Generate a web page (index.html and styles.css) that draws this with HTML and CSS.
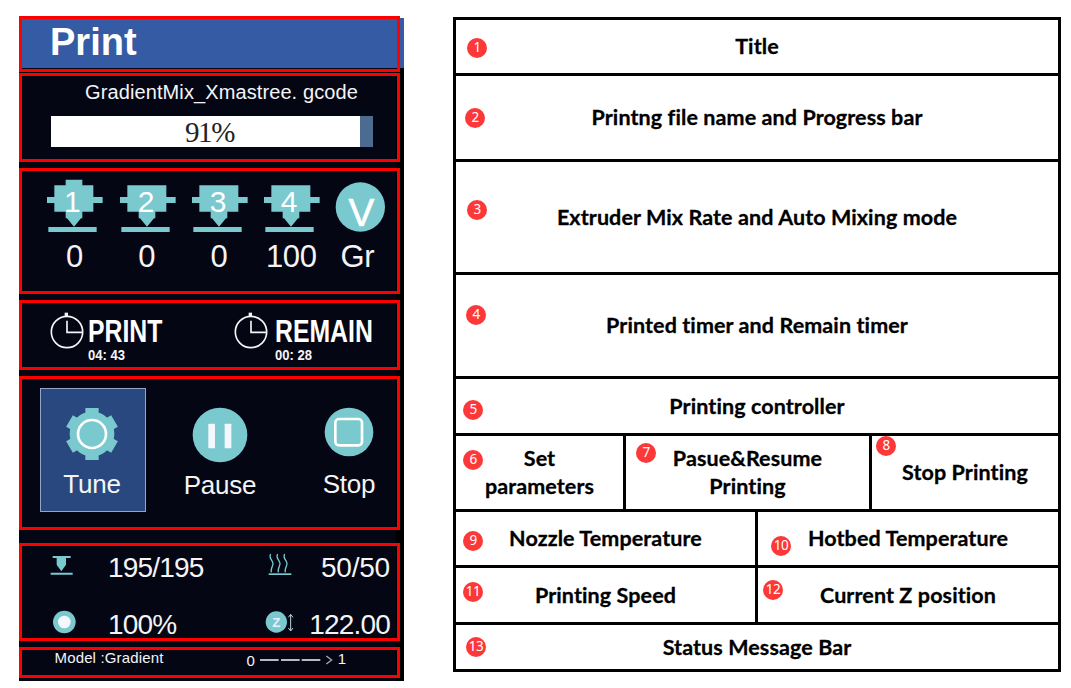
FILE: index.html
```html
<!DOCTYPE html>
<html lang="en">
<head>
<meta charset="utf-8">
<title>Print screen guide</title>
<link rel="stylesheet" href="styles.css">
</head>
<body>
<main class="page">
  <div class="screen">
    <header class="zone zone-title"><h1>Print</h1></header>

    <section class="zone zone-file">
      <div class="filename">GradientMix_Xmastree. gcode</div>
      <div class="progress"><div class="progress-fill" style="width:96%"></div><span class="progress-text">91%</span></div>
    </section>

    <section class="zone zone-mix">
      <div class="extruder">
        <svg class="ext-icon" viewBox="112 57 171 162"><path class="teal" d="M168 59h50v17h33v35h28v18h-28v26h-33v20h-4l-21 25-21-25h-4v-20h-34v-26h-22v-18h22V76h34zM116 201h145v15H116z"/><text class="ext-num" x="188" y="155">1</text></svg>
        <span>0</span>
      </div>
      <div class="extruder">
        <svg class="ext-icon" viewBox="112 57 171 162"><path class="teal" d="M134 76h117v35h28v18h-28v26h-33v20h-4l-21 25-21-25h-4v-20h-34v-26h-22v-18h22zM116 201h145v15H116z"/><text class="ext-num" x="190" y="155">2</text></svg>
        <span>0</span>
      </div>
      <div class="extruder">
        <svg class="ext-icon" viewBox="112 57 171 162"><path class="teal" d="M134 76h117v35h28v18h-28v26h-33v20h-4l-21 25-21-25h-4v-20h-34v-26h-22v-18h22zM116 201h145v15H116z"/><text class="ext-num" x="190" y="155">3</text></svg>
        <span>0</span>
      </div>
      <div class="extruder">
        <svg class="ext-icon" viewBox="112 57 171 162"><path class="teal" d="M134 76h117v35h28v18h-28v26h-33v20h-4l-21 25-21-25h-4v-20h-34v-26h-22v-18h22zM116 201h145v15H116z"/><text class="ext-num" x="187" y="155">4</text></svg>
        <span>100</span>
      </div>
      <div class="extruder mode">
        <svg class="ext-icon" viewBox="965 57 171 162"><circle class="teal" cx="1050" cy="141" r="74"/><text class="mode-letter" x="1053" y="198">V</text></svg>
        <span>Gr</span>
      </div>
    </section>

    <section class="zone zone-time">
      <div class="timer">
        <svg class="clock" viewBox="118 64 102 114"><circle cx="169" cy="124" r="47"/><path d="M169 90v35h46"/><path class="knob" d="M167 66v11"/></svg>
        <div class="timer-text"><b>PRINT</b><small>04: 43</small></div>
      </div>
      <div class="timer remain">
        <svg class="clock" viewBox="118 64 102 114"><circle cx="169" cy="124" r="47"/><path d="M169 90v35h46"/><path class="knob" d="M167 66v11"/></svg>
        <div class="timer-text"><b>REMAIN</b><small>00: 28</small></div>
      </div>
    </section>

    <section class="zone zone-control">
      <div class="control tune">
        <svg width="54" height="54" viewBox="-78 -81 162 162">
          <g class="teal"><circle r="67"/>
            <path d="M-20-78h40v156h-40z"/>
            <path d="M-20-78h40v156h-40z" transform="rotate(60)"/>
            <path d="M-20-78h40v156h-40z" transform="rotate(120)"/></g>
          <circle class="ring" r="42"/>
        </svg>
        <span>Tune</span>
      </div>
      <div class="control pause">
        <svg width="56" height="56" viewBox="-84 -84 168 168"><circle class="teal" r="82"/><rect class="light" x="-35" y="-34" width="20" height="74" rx="2"/><rect class="light" x="14" y="-34" width="20" height="74" rx="2"/></svg>
        <span>Pause</span>
      </div>
      <div class="control stop">
        <svg width="50" height="50" viewBox="-75 -75 150 150"><circle class="teal" r="73"/><rect class="ring" x="-41" y="-39" width="80" height="79" rx="11"/></svg>
        <span>Stop</span>
      </div>
    </section>

    <section class="zone zone-stats">
      <svg class="stat-icon" viewBox="120 63 90 96"><path class="teal" d="M128 78h54v6h-14v20l-14 20-14-20V84h-12zM122 128h66v6h-66z"/></svg>
      <span>195/195</span>
      <svg class="stat-icon" viewBox="765 63 90 96"><g class="heat"><path d="M782 72c-8 14 9 19 7 30s-8 15-5 25"/><path d="M803 72c-8 14 9 19 7 30s-8 15-5 25"/><path d="M824 72c-8 14 9 19 7 30s-8 15-5 25"/></g><path class="teal" d="M776 130h68v5h-68z"/></svg>
      <span class="right wide">50/50</span>
      <svg class="stat-icon" viewBox="120 234 90 96"><circle class="teal" cx="163" cy="276" r="34"/><circle class="light" cx="163" cy="276" r="19"/></svg>
      <span>100%</span>
      <svg class="stat-icon" viewBox="765 234 90 96"><circle class="teal" cx="799" cy="276" r="32"/><text class="z-letter" x="799" y="290">Z</text><path class="z-arrow" d="M842 254v48M835 262l7-9 7 9M835 294l7 9 7-9"/></svg>
      <span class="right">122.00</span>
    </section>

    <footer class="zone zone-status">
      <span class="model">Model :Gradient</span>
      <span class="from">0</span>
      <svg class="dashes" width="74" height="12" viewBox="749 370 222 36"><path d="M752 388h56M815 388h56M877 388h56"/><path class="chev" d="M951 376l16 12-16 12"/></svg>
      <span class="to">1</span>
    </footer>
  </div>

  <div class="legend">
    <div class="row r1"><div class="cell"><i class="badge b1">1</i>Title</div></div>
    <div class="row r2"><div class="cell"><i class="badge b2">2</i>Printng file name and Progress bar</div></div>
    <div class="row r3"><div class="cell"><i class="badge b3">3</i>Extruder Mix Rate and Auto Mixing mode</div></div>
    <div class="row r4"><div class="cell"><i class="badge b4">4</i>Printed timer and Remain timer</div></div>
    <div class="row r5"><div class="cell"><i class="badge b5">5</i>Printing controller</div></div>
    <div class="row r6">
      <div class="cell"><i class="badge b6">6</i>Set<br>parameters</div>
      <div class="cell"><i class="badge b7">7</i>Pasue&amp;Resume<br>Printing</div>
      <div class="cell"><i class="badge b8">8</i>Stop Printing</div>
    </div>
    <div class="row r7">
      <div class="cell"><i class="badge b9">9</i>Nozzle Temperature</div>
      <div class="cell"><i class="badge b10">10</i>Hotbed Temperature</div>
    </div>
    <div class="row r8">
      <div class="cell"><i class="badge b11">11</i>Printing Speed</div>
      <div class="cell"><i class="badge b12">12</i>Current Z position</div>
    </div>
    <div class="row r9"><div class="cell"><i class="badge b13">13</i>Status Message Bar</div></div>
  </div>
</main>
</body>
</html>
```
FILE: styles.css
```css
* { box-sizing: border-box; }
body { margin: 0; background: #fff; }
svg { display: block; flex: none; }

.page {
  display: flex;
  align-items: flex-start;
  width: 1071px;
  height: 688px;
  padding: 18px 0 0 19px;
  overflow: hidden;
}

/* Printer screen */
.screen {
  display: flex;
  flex-direction: column;
  flex: none;
  width: 385px;
  height: 663px;
  background:
    linear-gradient(#345ba4, #345ba4) 0 0 / 100% 50px no-repeat,
    linear-gradient(90deg, #050614 376px, #000 378px);
  color: #f4f4f6;
  font-family: "Liberation Sans", Arial, sans-serif;
  white-space: nowrap;
}
.zone { flex: none; width: 381px; border: 3px solid #fe0000; margin-top: 6px; }
.teal { fill: #79c9cf; }
.light { fill: #f4f8fc; }
.ring { fill: none; stroke: #fff; stroke-width: 8; }

.zone-title { height: 56px; margin-top: -2px; padding: 3px 0 0 28px; }
.zone-title h1 { margin: 0; font-size: 38px; line-height: 40px; font-weight: bold; color: #fff; }

.zone-file { height: 89px; margin-top: 1px; padding-top: 4px; }
.filename { padding-left: 24px; font-size: 20px; line-height: 24px; text-align: center; letter-spacing: 0.1px; }
.progress { display: grid; grid-template-rows: 31px; width: 322px; height: 31px; margin: 12px 0 0 29px; background: #4b6b91; }
.progress > * { grid-area: 1 / 1; }
.progress-fill { background: #fff; }
.progress-text {
  padding-right: 5px;
  font: 29px/33px "Liberation Serif", serif;
  letter-spacing: -1.4px;
  color: #222;
  text-align: center;
}

.zone-mix { display: grid; grid-template-columns: repeat(4, 72.3px) 63px; height: 126px; padding: 8px 0 0 17.7px; }
.extruder { display: flex; flex-direction: column; align-items: center; gap: 6px; font-size: 31px; line-height: 36px; letter-spacing: -0.4px; }
.extruder span { margin-left: -3px; }
.mode span { margin-left: -6px; }
.ext-icon { width: 57px; height: 54px; letter-spacing: 0; }
.ext-num { font-size: 90px; fill: #fff; text-anchor: middle; }
.mode-letter { font-size: 116px; fill: #fff; stroke: #fff; stroke-width: 2; text-anchor: middle; }

.zone-time { display: grid; grid-template-columns: 184.5px 1fr; height: 70px; padding: 9px 0 0 27.5px; }
.timer { display: flex; gap: 4.5px; }
.remain { gap: 7px; }
.clock { width: 34px; height: 38px; fill: none; stroke: #f4f4f6; stroke-width: 5; }
.knob { stroke-width: 10; }
.timer-text { display: flex; flex-direction: column; width: 0; padding-top: 5px; font-weight: bold; }
/* Condensed lettering */
.timer-text b { width: max-content; font-size: 31px; line-height: 30px; color: #fff; transform: scaleX(0.8); transform-origin: 0 0; }
.timer-text small { width: max-content; font-size: 15px; line-height: 16px; transform: scaleX(0.87); transform-origin: 0 0; }

.zone-control { display: flex; align-items: flex-start; height: 154px; padding: 9px 0 0 18px; }
.control { display: flex; flex-direction: column; align-items: center; font-size: 26px; line-height: 30px; letter-spacing: -0.2px; }
.tune { width: 106px; height: 124px; padding-top: 18px; gap: 8px; border: 1px solid #93a5c8; background: #29487f; }
.tune span { margin-left: -2px; }
.pause { width: 148px; padding-top: 19px; gap: 7px; }
.stop { width: 96px; margin-left: 7px; padding-top: 19px; gap: 12px; }

.zone-stats {
  display: grid;
  grid-template-columns: 58px 157px 30px 95px;
  grid-auto-rows: 57px;
  height: 98px;
  margin-top: 13px;
  padding: 5px 0 0 28px;
  font-size: 28px;
  line-height: 34px;
  letter-spacing: -0.8px;
}
.stat-icon { width: 30px; height: 32px; letter-spacing: 0; }
.right { text-align: right; }
.wide { letter-spacing: -0.2px; }
.heat { fill: none; stroke: #79c9cf; stroke-width: 4; }
.z-letter { font-size: 40px; font-weight: bold; fill: #eef; text-anchor: middle; }
.z-arrow { fill: none; stroke: #b9d6dc; stroke-width: 3; }

.zone-status { display: flex; height: 31px; padding-left: 32.5px; font-size: 15px; line-height: 18px; }
.model { width: 192px; margin-top: -1px; letter-spacing: 0.15px; }
.from { margin-top: 2px; }
.dashes { margin: 4px 4px 0; fill: none; stroke: #f4f4f6; stroke-width: 4; }
.to { margin-left: 1px; }
.chev { stroke: #aaa; stroke-width: 4; }

/* Numbered legend table */
.legend {
  flex: none;
  width: 608px;
  margin: -1px 0 0 49px;
  border: 3px solid #000;
  color: #000;
  font: bold 21.5px/28px Lato, Carlito, sans-serif;
  font-variant-ligatures: none;
  letter-spacing: 0.1px;
  -webkit-text-stroke: 0.3px #000;
  text-align: center;
}
.row { display: grid; border-bottom: 3px solid #000; }
.row:last-child { border-bottom: 0; }
.cell { position: relative; display: flex; align-items: center; justify-content: center; padding-bottom: 1px; white-space: nowrap; }
.cell + .cell { border-left: 3px solid #000; }
.r1 { height: 56px; }
.r2 { height: 86px; }
.r3 { height: 113px; }
.r4 { height: 104px; }
.r5 { height: 57px; }
.r6 { height: 76px; grid-template-columns: 167px 246px 1fr; }
.r7 { height: 56px; grid-template-columns: 299px 1fr; }
.r8 { height: 57px; grid-template-columns: 299px 1fr; }
.r9 { height: 44px; }

.badge {
  position: absolute;
  width: 20px;
  height: 20px;
  border-radius: 50%;
  background: #fc3838;
  color: #fff;
  font: 13.5px/19px "Noto Sans", sans-serif;
  letter-spacing: -0.5px;
  -webkit-text-stroke: 0;
}
.b1 { left: 11px; top: 18px; }
.b2 { left: 9px; top: 32px; }
.b3 { left: 11px; top: 38px; }
.b4 { left: 10px; top: 30px; }
.b5 { left: 7px; top: 21px; }
.b6 { left: 7px; top: 14px; }
.b7 { left: 10px; top: 7px; }
.b8 { left: 4px; top: 0; }
.b9 { left: 7px; top: 19px; }
.b10 { left: 13px; top: 24px; }
.b11 { left: 7px; top: 14px; }
.b12 { left: 5px; top: 12px; }
.b13 { left: 10px; top: 12px; }
```
